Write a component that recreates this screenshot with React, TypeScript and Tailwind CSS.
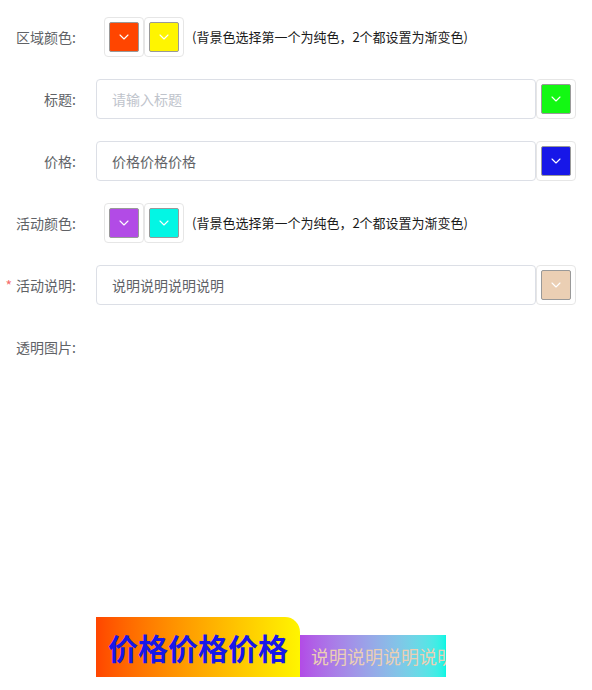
import React from "react";

const font = { fontFamily: '"Noto Sans CJK SC", "Liberation Sans", sans-serif' };

function Chevron() {
  return (
    <svg width="10" height="6" viewBox="0 0 10 6" fill="none">
      <polyline points="1,1 5,5 9,1" stroke="#ffffff" strokeWidth="1.1" strokeLinecap="round" strokeLinejoin="round" />
    </svg>
  );
}

function Picker({ color }: { color: string }) {
  return (
    <div className="w-10 h-10 box-border border border-[#e6e6e6] rounded-[4px] p-[4px] flex shrink-0">
      <div
        className="w-[30px] h-[30px] box-border border border-[#999999] rounded-[2px] flex items-center justify-center"
        style={{ backgroundColor: color }}
      >
        <Chevron />
      </div>
    </div>
  );
}

function Label({ text, required }: { text: string; required?: boolean }) {
  return (
    <div className="w-[96px] shrink-0 pr-[20px] text-right text-[14px] leading-10 text-[#606266]">
      {required && <span className="text-[#f56c6c] mr-[4px]">*</span>}
      {text}
    </div>
  );
}

function InputRow({ label, value, placeholder, color, required }: { label: string; value?: string; placeholder?: string; color: string; required?: boolean }) {
  return (
    <div className="flex items-center h-10 mb-[22px]">
      <Label text={label} required={required} />
      <div className="w-[440px] h-10 box-border border border-[#dcdfe6] rounded-[4px] px-[15px] flex items-center text-[14px]">
        {value ? <span className="text-[#606266]">{value}</span> : <span className="text-[#c0c4cc]">{placeholder}</span>}
      </div>
      <Picker color={color} />
    </div>
  );
}

function DoublePickerRow({ label, c1, c2 }: { label: string; c1: string; c2: string }) {
  return (
    <div className="flex items-center h-10 mb-[22px]">
      <Label text={label} />
      <div className="ml-2 flex">
        <Picker color={c1} />
        <Picker color={c2} />
      </div>
      <span className="ml-2 text-[13px] text-[#1a1a1a]">(背景色选择第一个为纯色，2个都设置为渐变色)</span>
    </div>
  );
}

export default function App() {
  return (
    <div className="w-[592px] h-[690px] bg-white pt-[17px] overflow-hidden" style={font}>
      <DoublePickerRow label="区域颜色:" c1="#ff4500" c2="#fff500" />
      <InputRow label="标题:" placeholder="请输入标题" color="#13f813" />
      <InputRow label="价格:" value="价格价格价格" color="#1717e8" />
      <DoublePickerRow label="活动颜色:" c1="#b24be6" c2="#03f6e4" />
      <InputRow label="活动说明:" value="说明说明说明说明" color="#ebcfb4" required />
      <div className="flex items-start mb-[22px]">
        <Label text="透明图片:" />
        <div className="h-[268px]" />
      </div>
      <div className="flex items-end ml-[96px]">
        <div className="h-[60px] px-3 flex items-center rounded-tr-[15px] bg-gradient-to-r from-[#ff4500] to-[#fff500] text-[30px] font-bold text-[#1717e8] whitespace-nowrap leading-none">
          价格价格价格
        </div>
        <div className="h-[42px] w-[146px] overflow-hidden pl-[11px] flex items-center bg-gradient-to-r from-[#b24be6] to-[#03f6e4] text-[18px] text-[#ebcfb4] whitespace-nowrap leading-none">
          说明说明说明说明
        </div>
      </div>
    </div>
  );
}
